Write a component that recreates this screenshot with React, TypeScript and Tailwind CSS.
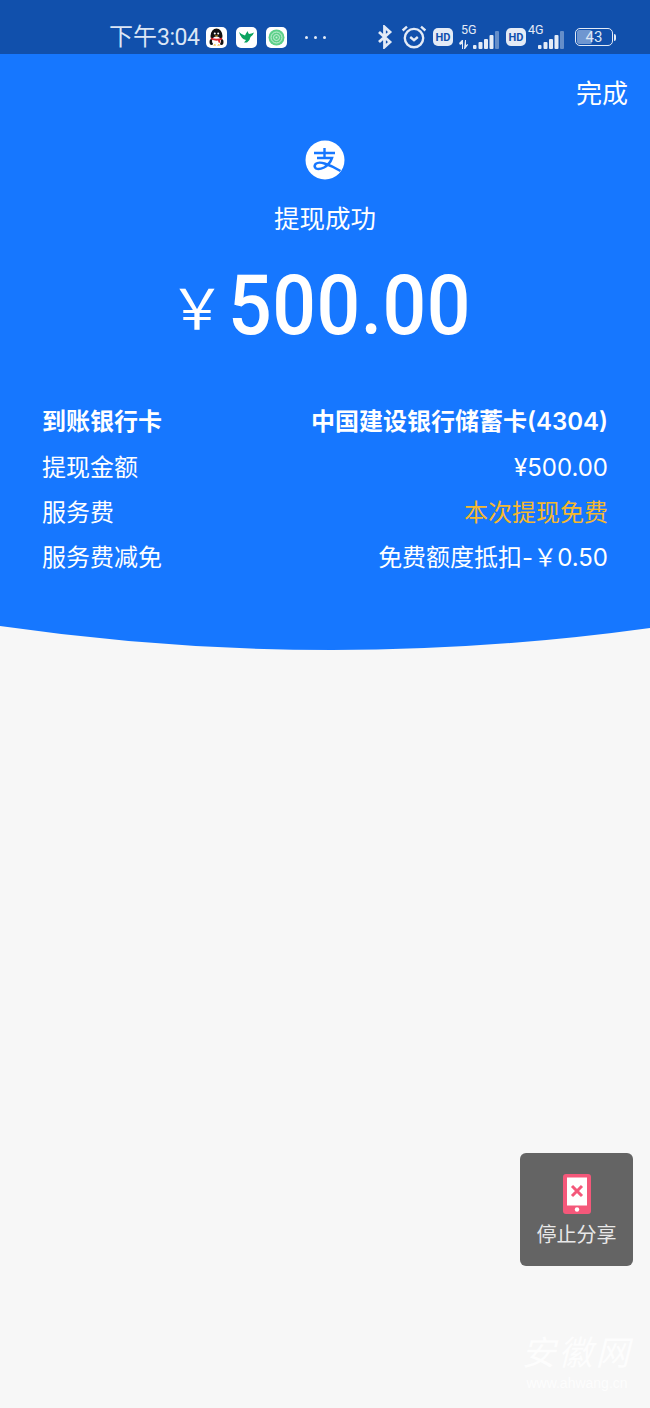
import type { FC, ReactNode } from "react";

const cjk = "font-['Roboto','Noto_Sans_CJK_SC',sans-serif]";

const AppBadge: FC<{ children: ReactNode }> = ({ children }) => (
  <div className="flex h-[21px] w-[21px] items-center justify-center overflow-hidden rounded-[5px] bg-white">{children}</div>
);

const HdBadge = () => (
  <div className="flex h-[18px] w-[20px] items-center justify-center rounded-[5px] bg-[#e4ebf6] text-[11px] leading-none font-bold text-[#1150ac]">
    HD
  </div>
);

const Signal: FC<{ label: string; arrows?: boolean }> = ({ label, arrows }) => (
  <svg width={arrows ? 41 : 39} height="28" viewBox={arrows ? "0 0 41 28" : "0 0 39 28"} className="shrink-0">
    <text x={arrows ? 3 : 0} y="11" fontSize="12.5" fill="#e4ebf6" fontFamily="Roboto, sans-serif">
      {label}
    </text>
    {arrows && <path d="M1 20l3-3h1v9H4v-5l-2 1zM7 17h1v5l2-1v1l-3 4H6z" fill="#e4ebf6" />}
    <g fill="#e4ebf6" transform={arrows ? "translate(15 0)" : "translate(10 0)"}>
      <rect x="0" y="22" width="3.500" height="4" rx="1" />
      <rect x="5.500" y="19" width="4" height="7" rx="1" />
      <rect x="11" y="16" width="4" height="10" rx="1" />
      <rect x="16.500" y="12" width="4" height="14" rx="1" />
      <rect x="22" y="8" width="4" height="18" rx="1" opacity="0.4" />
    </g>
  </svg>
);

const StatusBar = () => (
  <div className={`flex h-[54px] items-center bg-[#1150ac] pt-[20px] pl-[109px] text-[#dce6f5] ${cjk}`}>
    <span className="w-[97px] text-[24px] leading-none whitespace-nowrap">
      下午<span className="text-[23px] tracking-[-0.5px]">3:04</span>
    </span>
    <div className="flex items-center gap-[9px]">
      <AppBadge>
        <svg width="17" height="19" viewBox="0 0 17 19">
          <ellipse cx="8.500" cy="8" rx="6" ry="7.500" fill="#111" />
          <ellipse cx="3.500" cy="14" rx="2" ry="3" fill="#111" />
          <ellipse cx="13.500" cy="14" rx="2" ry="3" fill="#111" />
          <ellipse cx="8.500" cy="13" rx="4.500" ry="4.500" fill="#fff" />
          <path d="M3 9.500q5.500 2.500 11 0v2q-1 .5-2 .8l.5 2.700-2-.5-.5-2q-3 .5-7-1z" fill="#d8262c" />
          <circle cx="6.800" cy="5.500" r="1" fill="#fff" />
          <circle cx="10.200" cy="5.500" r="1" fill="#fff" />
          <path d="M6.500 7.500h4l-2 1.300z" fill="#f2b015" />
          <path d="M5 17.500h3l-1-1.500zM9 17.500h3l-1-1.500z" fill="#f2b015" />
        </svg>
      </AppBadge>
      <AppBadge>
        <svg width="17" height="15" viewBox="0 0 17 15">
          <path d="M1 2q3 3 6 3.500 1-3 3-4.500-.3 2 1 3 2.500-.3 5-1.500-1 3-3.500 4.500-.5 3.500-3.500 5.500H6l2-2.500Q3 9 1 2z" fill="#0ba360" />
        </svg>
      </AppBadge>
      <AppBadge>
        <svg width="17" height="17" viewBox="0 0 17 17" fill="none">
          <circle cx="8.500" cy="8.500" r="8" fill="#5dd08a" />
          <circle cx="8.500" cy="8.500" r="5.500" stroke="#c5f0d5" />
          <circle cx="8.500" cy="8.500" r="3" stroke="#c5f0d5" />
          <circle cx="8.500" cy="8.500" r="1" fill="#c5f0d5" />
        </svg>
      </AppBadge>
    </div>
    <div className="ml-[18px] flex w-[21px] justify-between">
      <span className="h-[3px] w-[3px] rounded-full bg-[#e4ebf6]" />
      <span className="h-[3px] w-[3px] rounded-full bg-[#e4ebf6]" />
      <span className="h-[3px] w-[3px] rounded-full bg-[#e4ebf6]" />
    </div>
    <div className="ml-[50px] flex items-center">
      <svg width="18" height="24" viewBox="0 0 16 24" fill="none" stroke="#e4ebf6" strokeWidth="2.800">
        <path d="M2 7l11 10-5.500 5V2L13 7 2 17" />
      </svg>
      <svg className="ml-[7px]" width="26" height="26" viewBox="0 0 24 24" fill="none" stroke="#e4ebf6" strokeWidth="2.200">
        <circle cx="12" cy="13" r="8.500" />
        <path d="M1.500 6l4-3.500M22.500 6l-4-3.500" />
        <path d="M8.500 12l3.500 3 3.500-3" />
      </svg>
      <div className="ml-[6px]">
        <HdBadge />
      </div>
      <div className="ml-[5px]">
        <Signal label="5G" arrows />
      </div>
      <div className="ml-[7px]">
        <HdBadge />
      </div>
      <div className="ml-[2px]">
        <Signal label="4G" />
      </div>
      <div className="ml-[8px] flex items-center">
        <div className="relative flex h-[18px] w-[38px] items-center justify-center overflow-hidden rounded-[5px] border-[1.500px] border-[#e4ebf6] text-[15px] leading-none">
          <span className="absolute inset-y-[1px] left-[1px] w-[15px] rounded-[2px] bg-[#6f96d0]" />
          <span className="relative">43</span>
        </div>
        <span className="ml-[1px] h-[7px] w-[2px] rounded-r-sm bg-[#e4ebf6]" />
      </div>
    </div>
  </div>
);

const rows = [
  { label: "提现金额", value: "¥500.00" },
  { label: "服务费", value: "本次提现免费", accent: true },
  { label: "服务费减免", value: "免费额度抵扣-￥0.50" },
];

const Hero = () => (
  <div className={`bg-[#1677ff] text-white ${cjk}`}>
    <div className="flex justify-end pt-[22px] pr-[22px]">
      <button type="button" className="text-[26px] leading-[36px]">
        完成
      </button>
    </div>
    <div className="mt-[28px] flex justify-center">
      <svg width="40" height="40" viewBox="0 0 40 40">
        <circle cx="20" cy="20" r="19.500" fill="#fff" />
        <g fill="none" stroke="#1677ff" strokeWidth="2.400">
          <path d="M9 13h21M19.500 8v9M12 18h15q-2 6-8 9.500-5 2.500-8 1-2.500-2-.5-4.500 3-2.500 9-.5 8 2.500 16 7.500" />
        </g>
      </svg>
    </div>
    <div className="mt-[19px] text-center text-[25.500px] leading-[40px]">提现成功</div>
    <div className="mt-[20px] flex items-baseline justify-center pr-[10px]">
      <span className="mr-[5px] -translate-y-[7px] text-[56px] leading-none">￥</span>
      <span className="ml-[-2px] origin-bottom scale-y-[1.08] text-[77px] leading-[102px] font-medium tracking-[0.5px]">500.00</span>
    </div>
    <div className="mt-[38px] px-[42px] font-['Inter','Noto_Sans_CJK_SC',sans-serif] text-[24px]">
      <div className="flex h-[46px] items-center justify-between font-semibold whitespace-nowrap">
        <span>到账银行卡</span>
        <span>中国建设银行储蓄卡(4304)</span>
      </div>
      {rows.map((row) => (
        <div key={row.label} className="flex h-[45px] items-center justify-between whitespace-nowrap">
          <span>{row.label}</span>
          <span className={row.accent ? "text-[#f5b82e]" : undefined}>{row.value}</span>
        </div>
      ))}
    </div>
    <div className="h-[46px]" />
  </div>
);

export default function App() {
  return (
    <div className="relative h-[1408px] w-[650px] overflow-hidden bg-[#f7f7f7]">
      <StatusBar />
      <Hero />
      {/* bottom curve of the blue header */}
      <svg width="650" height="27" viewBox="0 0 650 27" className="block">
        <path d="M0 0H650V2Q325 47 0 0Z" fill="#1677ff" />
      </svg>

      <div className={`absolute top-[1153px] left-[520px] flex h-[113px] w-[113px] flex-col items-center rounded-[6px] bg-[#646464] text-[#e8e8e8] ${cjk}`}>
        <svg className="mt-[21px]" width="28" height="40" viewBox="0 0 28 40">
          <rect width="28" height="40" rx="3" fill="#f4587a" />
          <rect x="4" y="3.500" width="20" height="28" fill="#fff" />
          <circle cx="14" cy="35.500" r="2.200" fill="#fff" />
          <path d="M9 12l10 10M19 12L9 22" stroke="#f4587a" strokeWidth="3" />
        </svg>
        <span className="mt-[7px] text-[20px] leading-[28px] whitespace-nowrap">停止分享</span>
      </div>

      <div className="absolute top-[1326px] left-[519px] flex w-[116px] flex-col items-center text-white opacity-80">
        <span className="font-['Noto_Sans_CJK_SC',serif] text-[34px] leading-[49px] tracking-[3px] italic whitespace-nowrap">安徽网</span>
        <span className="font-['Liberation_Sans',sans-serif] text-[14px] leading-[16px] whitespace-nowrap">www.ahwang.cn</span>
      </div>
    </div>
  );
}
